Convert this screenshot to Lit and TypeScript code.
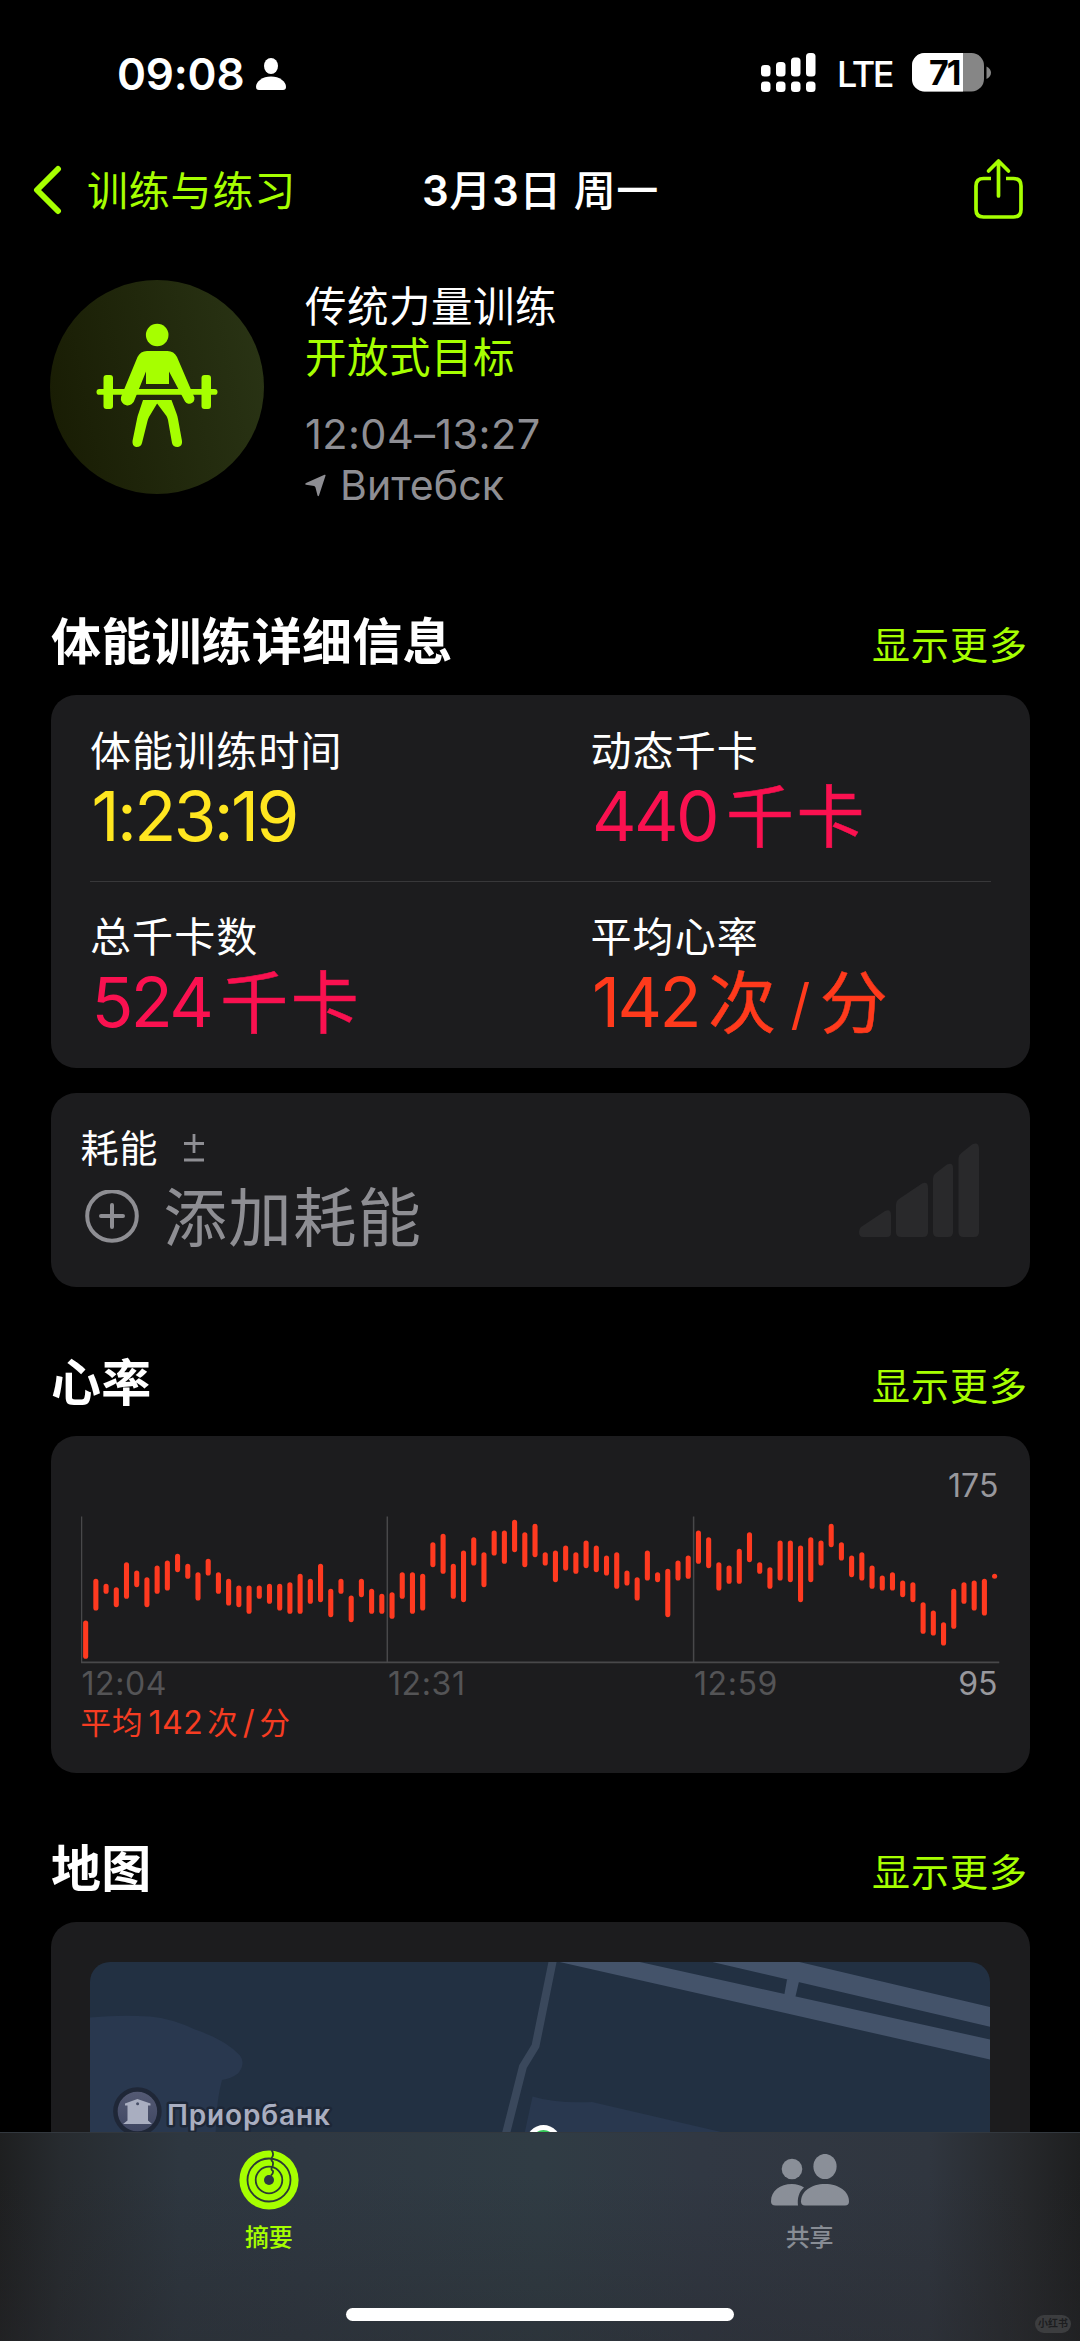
import { LitElement, html, svg, css } from "lit";
import { customElement, property } from "lit/decorators.js";

type Metric = { label: string; value: string; unit: string; tone: string; slash?: string; tail?: string };

const METRICS: Metric[][] = [
  [
    { label: "体能训练时间", value: "1:23:19", unit: "", tone: "yellow" },
    { label: "动态千卡", value: "440", unit: "千卡", tone: "pink" },
  ],
  [
    { label: "总千卡数", value: "524", unit: "千卡", tone: "pink" },
    { label: "平均心率", value: "142", unit: "次", tone: "orange", slash: "/", tail: "分" },
  ],
];

// Heart-rate ranges, [top, bottom] in thirds of a pixel below the chart's own origin.
const RATES: [number, number][] = [
  [570, 685], [445, 540], [460, 490], [470, 530], [395, 505], [420, 470], [440, 530], [405, 490], [390, 480], [370, 425],
  [400, 445], [425, 510], [385, 435], [425, 490], [445, 525], [465, 530], [465, 550], [465, 505], [460, 520], [460, 540],
  [455, 550], [430, 550], [445, 520], [400, 515], [475, 560], [445, 490], [495, 575], [445, 500], [475, 550], [490, 550],
  [485, 565], [425, 505], [425, 550], [430, 540], [335, 410], [310, 430], [400, 505], [360, 515], [320, 405], [365, 470],
  [300, 375], [300, 400], [268, 365], [305, 410], [280, 380], [365, 405], [360, 455], [345, 420], [365, 430], [330, 413],
  [345, 425], [375, 435], [365, 475], [420, 465], [440, 510], [360, 450], [425, 455], [415, 560], [390, 450], [375, 445],
  [300, 400], [320, 413], [395, 480], [405, 460], [355, 460], [305, 395], [395, 430], [410, 475], [330, 450], [330, 455],
  [345, 515], [320, 455], [330, 405], [280, 350], [335, 390], [375, 440], [365, 450], [405, 475], [435, 480], [425, 480],
  [450, 500], [455, 515], [515, 610], [540, 615], [575, 645], [475, 595], [455, 520], [450, 540], [445, 555], [430, 445],
];

const base = css`
  :host { display: block; box-sizing: border-box; }
  * { box-sizing: border-box; }
  svg { display: block; flex: none; }
`;

@customElement("status-bar")
class StatusBar extends LitElement {
  static styles = [base, css`
    :host { height: 146px; }
    .bar { display: flex; align-items: flex-start; padding: 52px 88px 0 117px; color: #fff; height: 100%; }
    .time { font-size: 44px; line-height: 44px; font-weight: 600; letter-spacing: -.2px; width: 139px; }
    .grow { flex: 1; }
    .lte { font-size: 36px; line-height: 45px; font-weight: 500; letter-spacing: -2.300px; margin-left: 21px; width: 75px; }
    .person { margin-top: 5px; }
    .level { font: 700 34px Inter, sans-serif; letter-spacing: -2px; }
  `];
  render() {
    const cols = [0, 15, 30, 45];
    const tops = [12, 9, 4.5, 0];
    return html`<div class="bar">
      <div class="time">09:08</div>
      <svg class="person" width="30" height="34" viewBox="0 0 30 34" fill="#fff">
        <ellipse cx="15" cy="9" rx="7" ry="8" />
        <path d="M15 19.5C6.500 19.500 0 24.500 0 29.800C0 32 1 33 3 33H27C29 33 30 32 30 29.800C30 24.500 23.500 19.500 15 19.500Z" />
      </svg>
      <div class="grow"></div>
      <svg width="55" height="41" viewBox="0 0 55 41" fill="#fff">
        ${cols.map((x, i) => svg`<rect x=${x} y=${1 + tops[i]} width="9.500" height=${23.5 - tops[i]} rx="3.500" />
          <rect x=${x} y="29.500" width="9.500" height="10.500" rx="3.500" />`)}
      </svg>
      <div class="lte">LTE</div>
      <svg width="80" height="41" viewBox="0 0 80 41">
        <clipPath id="cell"><rect x="0" y="1" width="72" height="38.500" rx="12.500" /></clipPath>
        <g clip-path="url(#cell)">
          <rect width="72" height="41" fill="#868686" /><rect width="51" height="41" fill="#fff" />
        </g>
        <path d="M74.500 14.500C80.500 17 80.500 24.500 74.500 27Z" fill="#868686" />
        <text class="level" x="17" y="33">71</text>
      </svg>
    </div>`;
  }
}

@customElement("nav-bar")
class NavBar extends LitElement {
  static styles = [base, css`
    :host { height: 114px; }
    .bar { display: grid; grid-template-columns: 422px 1fr auto; align-items: start; padding: 12px 57px 0 0; }
    .back { display: flex; align-items: center; height: 64px; padding-left: 32px; color: #a6ff00; font-size: 41px; letter-spacing: .8px; gap: 24px; }
    .back-label { margin-top: -4px; }
    .title { height: 64px; line-height: 65px; color: #fff; font-size: 42px; font-weight: 600; letter-spacing: .6px; white-space: nowrap; }
    .cjk { font-weight: 500; }
  `];
  render() {
    return html`<div class="bar">
      <div class="back">
        <svg width="31" height="50" viewBox="0 0 31 50" fill="none" stroke="#a6ff00" stroke-width="6" stroke-linecap="round" stroke-linejoin="round"><path d="M26 4L5 25L26 46" /></svg>
        <span class="back-label">训练与练习</span>
      </div>
      <div class="title">3<span class="cjk">月</span>3<span class="cjk">日 周一</span></div>
      <svg width="49" height="62" viewBox="0 0 49 62" fill="none" stroke="#a6ff00" stroke-width="3.700" stroke-linecap="round" stroke-linejoin="round">
        <path d="M17 20.500H9.500Q2 20.500 2 28V51.500Q2 59 9.500 59H39.500Q47 59 47 51.500V28Q47 20.500 39.500 20.500H32" stroke-linecap="butt" />
        <path d="M24.500 38V3M14.500 13L24.500 3L34.500 13" />
      </svg>
    </div>`;
  }
}

@customElement("workout-header")
class WorkoutHeader extends LitElement {
  static styles = [base, css`
    :host { height: 327px; }
    .head { display: flex; padding: 20px 0 0 50px; gap: 41px; }
    .info { display: flex; flex-direction: column; color: #fff; font-size: 41.500px; line-height: 51px; padding-top: 2px; letter-spacing: .5px; white-space: nowrap; }
    .goal { color: #a6ff00; }
    .when { color: #8e8e93; margin-top: 25px; font-size: 41.500px; letter-spacing: .4px; }
    .where { color: #8e8e93; display: flex; align-items: center; gap: 14px; font-size: 41px; letter-spacing: .1px; }
  `];
  render() {
    return html`<div class="head">
      <svg width="214" height="214" viewBox="50.500 280 214 214">
        <defs><linearGradient id="disc" x1="0" y1=".6" x2="1" y2=".4"><stop offset="0" stop-color="#191d04" /><stop offset="1" stop-color="#293314" /></linearGradient></defs>
        <circle cx="157.500" cy="387" r="107" fill="url(#disc)" />
        <g fill="#a6ff00">
          <circle cx="157.700" cy="335" r="11.300" />
          <path d="M147.500 351H168Q174.500 351 177.500 357L194 395.500A4.800 4.800 0 0 1 185.500 401.500L169.500 371.500V384H146.500V371.500L135 400A4.800 4.800 0 0 1 121.500 397L138 357Q141 351 147.500 351Z" />
          <rect x="97" y="389" width="121" height="5.800" rx="2.900" />
          <rect x="104" y="375" width="9.500" height="34" rx="3" /><rect x="202" y="375" width="9.500" height="34" rx="3" />
          <path d="M143.500 400H172L177 413.500Q178 416 178.500 419L182.500 441Q183.200 446 178.500 447Q173.500 447.300 172.500 443L168.500 420Q168 418 167 416L157.600 403.500L149.500 417Q148.500 419 148 421L142.500 443Q141.500 447.300 136.500 447Q132.500 446 133 441L137.500 419Q138 416 139 413.500Z" />
        </g>
      </svg>
      <div class="info">
        <div>传统力量训练</div>
        <div class="goal">开放式目标</div>
        <div class="when">12:04–13:27</div>
        <div class="where">
          <svg width="21" height="23" viewBox="0 0 21 23" fill="#8e8e93"><path d="M19.500 .8Q21 .2 20.400 2L14 21.500Q13.300 23 12.500 21.500L10.500 13.500Q10.200 12.500 9.200 12L1 10.800Q-.5 10 1 9Z" /></svg>
          <span>Витебск</span>
        </div>
      </div>
    </div>`;
  }
}

@customElement("section-title")
class SectionTitle extends LitElement {
  @property() label = "";
  static styles = [base, css`
    .row { display: flex; justify-content: space-between; padding: 0 52px 0 51px; height: 108px; }
    .name { color: #fff; font-size: 50px; font-weight: 700; line-height: 110px; letter-spacing: .2px; }
    .more { color: #a6ff00; font-size: 38px; line-height: 116px; letter-spacing: 1px; }
  `];
  render() {
    return html`<div class="row"><div class="name">${this.label}</div><div class="more">显示更多</div></div>`;
  }
}

@customElement("metric-card")
class MetricCard extends LitElement {
  static styles = [base, css`
    .card { background: #1c1c1e; border-radius: 25px; height: 373px; padding: 0 39px; }
    .row { display: grid; grid-template-columns: 500.500px 1fr; height: 186px; padding-top: 32px; }
    .row + .row { border-top: 1.500px solid #38383a; padding-top: 31px; }
    .label { color: #fff; font-size: 41px; line-height: 48px; letter-spacing: 1.100px; margin-left: .5px; }
    .value { display: flex; align-items: center; height: 82px; font-size: 69px; line-height: 82px; letter-spacing: -2.600px; white-space: nowrap; margin-left: 2px; }
    .cjk { font-size: 68px; letter-spacing: 2.500px; margin-left: 9px; position: relative; top: 1px; -webkit-text-stroke: .5px currentColor; }
    .slash { font-size: 55px; margin-left: 12px; position: relative; top: 2px; }
    .slash + .cjk { margin-left: 12px; }
    .yellow { color: #ffe620; } .pink { color: #fa1150; } .orange { color: #ff3a1c; }
  `];
  render() {
    return html`<div class="card">${METRICS.map((r) => html`<div class="row">${r.map((m) => html`<div>
      <div class="label">${m.label}</div>
      <div class="value ${m.tone}"><span>${m.value}</span>${m.unit ? html`<span class="cjk">${m.unit}</span>` : ""}${m.slash ? html`<span class="slash">${m.slash}</span><span class="cjk">${m.tail}</span>` : ""}</div>
    </div>`)}</div>`)}</div>`;
  }
}

@customElement("effort-card")
class EffortCard extends LitElement {
  static styles = [base, css`
    :host { margin-top: 25px; }
    .card { display: flex; justify-content: space-between; background: #1c1c1e; border-radius: 25px; height: 194px; padding: 31px 51px 0 30px; }
    .top { display: flex; align-items: center; height: 50px; color: #fff; font-size: 38px; line-height: 50px; letter-spacing: .9px; gap: 26px; }
    .name { margin-top: -3px; }
    .pm { margin-top: -2px; }
    .add { display: flex; align-items: center; height: 86px; color: #8e8e93; font-size: 63.500px; letter-spacing: 1.200px; gap: 25px; padding-left: 4px; line-height: 86px; }
    .label { white-space: nowrap; padding-top: 2px; }
    .level { margin-top: 19px; }
  `];
  render() {
    return html`<div class="card">
      <div>
        <div class="top"><span class="name">耗能</span>
          <svg class="pm" width="20" height="28" viewBox="0 0 20 28" stroke="#8e8e93" stroke-width="2.800"><path d="M10 0V19M0 9.500H20M0 26H20" /></svg>
        </div>
        <div class="add">
          <svg width="54" height="54" viewBox="0 0 54 54" fill="none" stroke="#8e8e93" stroke-width="4"><circle cx="27" cy="26" r="24.800" /><path d="M27 15V37M16 26H38" stroke-linecap="round" /></svg>
          <span class="label">添加耗能</span>
        </div>
      </div>
      <svg class="level" width="120" height="95" viewBox="859 1143 120 95" fill="#29292b">
        <path d="M861 1227L885 1211Q891 1208.500 891 1215V1233Q891 1237 887 1237H863Q859 1237 859 1232Q859 1229 861 1227Z" />
        <path d="M899 1199L922 1183.500Q928 1181 928 1188V1232Q928 1237 923 1237H901Q896 1237 896 1232V1205Q896 1201 899 1199Z" />
        <path d="M936 1173L947 1164.500Q953 1162 953 1168V1232Q953 1237 948 1237H938Q933 1237 933 1232V1179Q933 1175 936 1173Z" />
        <path d="M961.500 1153L972 1144.500Q979 1141 979 1149V1232Q979 1237 974 1237H963.500Q958.500 1237 958.500 1232V1159Q958.500 1155 961.500 1153Z" />
      </svg>
    </div>`;
  }
}

@customElement("heart-card")
class HeartCard extends LitElement {
  static styles = [base, css`
    .card { background: #1c1c1e; border-radius: 25px; height: 337px; padding: 34px 30px 0; font-size: 32px; }
    .max { text-align: right; color: #98989d; line-height: 32px; height: 46px; padding-right: 1px; letter-spacing: .1px; }
    .axis { display: grid; grid-template-columns: 306.500px 306px 1fr auto; color: #545456; line-height: 37px; height: 37px; margin-top: 1px; padding-right: 2px; letter-spacing: .6px; }
    .tick { padding-left: 1px; }
    .min { color: #98989d; letter-spacing: 0; }
    .avg { display: flex; align-items: center; color: #f63c22; line-height: 41px; height: 40px; font-size: 30.500px; letter-spacing: 1px; }
    .num { margin: 0 4px 0 5px; font-size: 32px; letter-spacing: .5px; }
    .slash { margin: 0 4px; font-size: 33px; }
  `];
  render() {
    return html`<div class="card">
      <div class="max">175</div>
      <svg width="919" height="148" viewBox="80.700 1515.500 919 148">
        <path d="M81.200 1516V1662M387 1516V1662M693.300 1516V1662" stroke="#48484a" stroke-width="1.500" />
        <path d="M80 1661.800H999" stroke="#48484a" stroke-width="1.700" />
        ${RATES.map(([a, b], i) => svg`<rect x=${82.8 + i * 10.213} y=${1430 + a / 3} width="5.100" height=${(b - a) / 3} rx="2.550" fill="#ff3a20" />`)}
      </svg>
      <div class="axis"><span class="tick">12:04</span><span class="tick">12:31</span><span class="tick">12:59</span><span class="min">95</span></div>
      <div class="avg"><span>平均</span><span class="num">142</span><span>次</span><span class="slash">/</span><span>分</span></div>
    </div>`;
  }
}

@customElement("map-card")
class MapCard extends LitElement {
  static styles = [base, css`
    .card { background: #1c1c1e; border-radius: 25px 25px 0 0; padding: 40px 39.500px 0; height: 211px; overflow: hidden; }
    .place { font: 600 28px Inter, sans-serif; fill: #a9aec0; stroke: #1d2737; stroke-width: 5px; stroke-linejoin: round; paint-order: stroke; }
  `];
  render() {
    return html`<div class="card">
      <svg width="900" height="190" viewBox="90 1962.500 900 190">
        <defs>
          <clipPath id="tile"><rect x="90" y="1962.500" width="900" height="300" rx="20" /></clipPath>
          <linearGradient id="poi" x1="0" y1="0" x2="0" y2="1"><stop offset="0" stop-color="#555b75" /><stop offset="1" stop-color="#3e4560" /></linearGradient>
        </defs>
        <g clip-path="url(#tile)">
          <rect x="90" y="1962" width="900" height="300" fill="#223042" />
          <path d="M90 2018Q120 2015 150 2017Q172 2019 195 2030Q225 2040 240 2056Q246 2064 238 2074Q231 2079 222 2080.500Q218 2096 217 2110L214 2160H90Z" fill="#29384f" />
          <path d="M532.500 2097Q555 2104 592 2102.500L719 2132L800 2155H520Z" fill="#29384f" />
          <path d="M553 1960L535.500 2046.500L523 2067L505 2138" fill="none" stroke="#3a485c" stroke-width="8" stroke-linejoin="round" />
          <path d="M553 1961H633L990 2040V2060Z M706 1961H793L990 2007.500V2027.300Z M787 1980L799 1982L795 1999L784 1997Z" fill="#44536a" />
          <circle cx="543.500" cy="2143" r="17.400" fill="#fff" /><circle cx="543.500" cy="2143" r="12.400" fill="#34c759" />
          <circle cx="137.400" cy="2112" r="22" fill="url(#poi)" stroke="#1f2737" stroke-width="4.500" />
          <path d="M137.400 2099.500L150.500 2104V2106H148V2121L152 2124.500H123L127.500 2121V2106H125V2104Z" fill="#a9aec0" />
          <circle cx="137.600" cy="2104.300" r="1.500" fill="#474e66" />
          <text class="place" x="167" y="2125" textLength="163" lengthAdjust="spacing">Приорбанк</text>
        </g>
      </svg>
    </div>`;
  }
}

@customElement("tab-bar")
class TabBar extends LitElement {
  static styles = [base, css`
    .bar { position: relative; height: 209px; background: linear-gradient(180deg, transparent 20%, rgba(38, 38, 42, .35)), linear-gradient(90deg, #1e1f20 0, #272b2f 60px, #2e3740 180px, #2f3842 300px, #303c44 540px, #313843 700px, #30363f 930px, #27292c 1020px, #1e1f20 1080px); border-top: 1px solid #32383e; }
    .tabs { display: grid; grid-template-columns: 1fr 1fr; margin-left: -1.500px; }
    .tab { display: flex; flex-direction: column; align-items: center; color: #888d95; font-size: 24px; line-height: 35px; padding-top: 17px; font-weight: 500; }
    .on { color: #a6ff00; }
    .icon { display: flex; align-items: center; height: 60px; margin-bottom: 10px; }
    .home { position: absolute; left: 346px; bottom: 20px; width: 388px; height: 13px; border-radius: 7px; background: #fff; }
    .mark { position: absolute; right: 9px; bottom: 8px; width: 36px; height: 18px; border-radius: 9px; background: #3c3d3f; color: #1c1d1f; font-size: 10px; line-height: 17px; text-align: center; font-weight: 700; }
  `];
  render() {
    return html`<div class="bar">
      <div class="tabs">
        <div class="tab on">
          <div class="icon"><svg width="60" height="60" viewBox="-30 -30 60 60">
            <circle r="29.600" fill="#a6ff00" />
            <g fill="none" stroke="#2b3a35" stroke-width="1.800"><circle r="21.500" /><circle r="13.300" />
              <path d="M2.500 -30Q5 -26.500 3.500 -23.500Q1 -20.500 3.800 -18Q4.500 -15.500 3 -12.500Q1.500 -10.500 4 -9Q4.500 -6.500 2 -4.500" /></g>
            <circle r="5" fill="#2d3742" />
          </svg></div>
          <div>摘要</div>
        </div>
        <div class="tab">
          <div class="icon"><svg width="78" height="52" viewBox="770 2153.500 78 52" fill="#8a8f98">
            <circle cx="791" cy="2168.500" r="10.300" /><ellipse cx="824" cy="2166" rx="11.600" ry="12.600" />
            <path d="M774.500 2205Q770 2205 770 2201C770 2190 779 2183.500 791 2183.500Q798 2183.500 803 2187C798 2191 796 2198 797 2205Z" />
            <path d="M804 2205Q800 2205 800 2201C800 2191 810 2183.500 824 2183.500S848 2191 848 2201Q848 2205 844 2205Z" />
          </svg></div>
          <div>共享</div>
        </div>
      </div>
      <div class="home"></div>
      <div class="mark">小红书</div>
    </div>`;
  }
}

@customElement("app-root")
class AppRoot extends LitElement {
  static styles = [base, css`
    :host { display: flex; flex-direction: column; width: 1080px; height: 2341px; background: #000; overflow: hidden; font-family: Inter, "Noto Sans CJK SC", sans-serif; font-weight: 400; }
    .page { height: 2132px; overflow: hidden; }
    .body { padding: 0 50.500px; }
    .body section-title { margin: 0 -50.500px; }
    .gap { height: 41px; }
  `];
  render() {
    return html`
      <div class="page">
        <status-bar></status-bar>
        <nav-bar></nav-bar>
        <workout-header></workout-header>
        <div class="body">
          <section-title label="体能训练详细信息"></section-title>
          <metric-card></metric-card>
          <effort-card></effort-card>
          <div class="gap"></div>
          <section-title label="心率"></section-title>
          <heart-card></heart-card>
          <div class="gap"></div>
          <section-title label="地图"></section-title>
          <map-card></map-card>
        </div>
      </div>
      <tab-bar></tab-bar>`;
  }
}
